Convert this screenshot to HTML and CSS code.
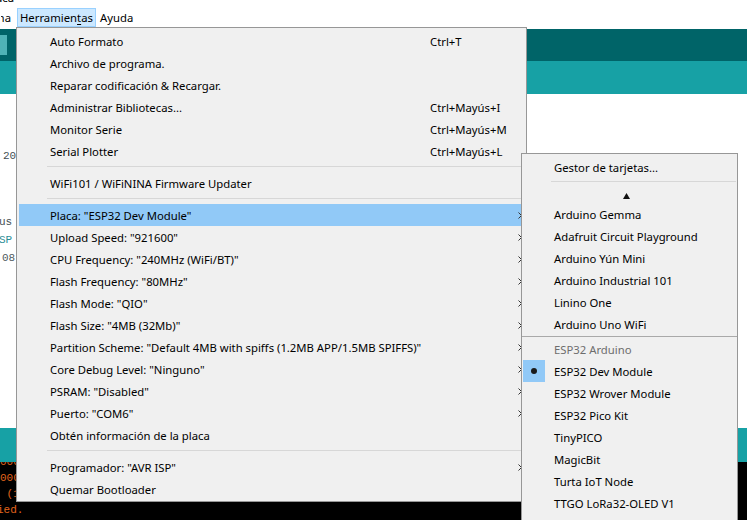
FILE: index.html
```html
<!DOCTYPE html>
<html lang="es">
<head>
<meta charset="utf-8">
<title>Herramientas</title>
<link rel="stylesheet" href="styles.css">
</head>
<body>
<div class="app">
  <div class="titlebar"><span class="clip-end">Arduino 1.8.13 - sketch_espnow_dev_placa</span></div>
  <div class="menubar">
    <span class="mb-item mb-cut"><span>Programa</span></span>
    <span class="mb-item mb-active">Herramien<u>t</u>as</span>
    <span class="mb-item mb-plain">Ayuda</span>
  </div>
  <div class="toolbar"><span class="tb-btn"></span></div>
  <div class="tabs"></div>
  <div class="editor">
    <div class="code l1"><span class="c-dark">20</span></div>
    <div class="code l2"><span class="c-dark">us</span></div>
    <div class="code l3"><span class="c-teal">SP</span></div>
    <div class="code l4"><span class="c-gray">08)</span></div>
  </div>
  <div class="status"></div>
  <div class="console">
    <div class="con-lines">
      <div class="con-line">000</div>
      <div class="con-line">000</div>
      <div class="con-line"> (1</div>
      <div class="con-line con-cut">ied.</div>
    </div>
  </div>
</div>

<div class="menu">
  <div class="item"><span class="ck"></span><span class="lbl">Auto Formato</span><span class="sc">Ctrl+T</span><span></span></div>
  <div class="item"><span class="ck"></span><span class="lbl">Archivo de programa.</span><span class="sc"></span><span></span></div>
  <div class="item"><span class="ck"></span><span class="lbl">Reparar codificación &amp; Recargar.</span><span class="sc"></span><span></span></div>
  <div class="item"><span class="ck"></span><span class="lbl">Administrar Bibliotecas...</span><span class="sc">Ctrl+Mayús+I</span><span></span></div>
  <div class="item"><span class="ck"></span><span class="lbl">Monitor Serie</span><span class="sc">Ctrl+Mayús+M</span><span></span></div>
  <div class="item"><span class="ck"></span><span class="lbl">Serial Plotter</span><span class="sc">Ctrl+Mayús+L</span><span></span></div>
  <div class="sep"></div>
  <div class="item"><span class="ck"></span><span class="lbl">WiFi101 / WiFiNINA Firmware Updater</span><span class="sc"></span><span></span></div>
  <div class="sep"></div>
  <div class="item selected"><span class="ck"></span><span class="lbl">Placa: "ESP32 Dev Module"</span><span class="sc"></span><span class="arrow"><svg width="4" height="7" viewBox="0 0 4 7"><path d="M0.5 0.5 L3.5 3.5 L0.5 6.5" fill="none" stroke="#333" stroke-width="1"/></svg></span></div>
  <div class="item"><span class="ck"></span><span class="lbl">Upload Speed: "921600"</span><span class="sc"></span><span class="arrow"><svg width="4" height="7" viewBox="0 0 4 7"><path d="M0.5 0.5 L3.5 3.5 L0.5 6.5" fill="none" stroke="#333" stroke-width="1"/></svg></span></div>
  <div class="item"><span class="ck"></span><span class="lbl">CPU Frequency: "240MHz (WiFi/BT)"</span><span class="sc"></span><span class="arrow"><svg width="4" height="7" viewBox="0 0 4 7"><path d="M0.5 0.5 L3.5 3.5 L0.5 6.5" fill="none" stroke="#333" stroke-width="1"/></svg></span></div>
  <div class="item"><span class="ck"></span><span class="lbl">Flash Frequency: "80MHz"</span><span class="sc"></span><span class="arrow"><svg width="4" height="7" viewBox="0 0 4 7"><path d="M0.5 0.5 L3.5 3.5 L0.5 6.5" fill="none" stroke="#333" stroke-width="1"/></svg></span></div>
  <div class="item"><span class="ck"></span><span class="lbl">Flash Mode: "QIO"</span><span class="sc"></span><span class="arrow"><svg width="4" height="7" viewBox="0 0 4 7"><path d="M0.5 0.5 L3.5 3.5 L0.5 6.5" fill="none" stroke="#333" stroke-width="1"/></svg></span></div>
  <div class="item"><span class="ck"></span><span class="lbl">Flash Size: "4MB (32Mb)"</span><span class="sc"></span><span class="arrow"><svg width="4" height="7" viewBox="0 0 4 7"><path d="M0.5 0.5 L3.5 3.5 L0.5 6.5" fill="none" stroke="#333" stroke-width="1"/></svg></span></div>
  <div class="item"><span class="ck"></span><span class="lbl">Partition Scheme: "Default 4MB with spiffs (1.2MB APP/1.5MB SPIFFS)"</span><span class="sc"></span><span class="arrow"><svg width="4" height="7" viewBox="0 0 4 7"><path d="M0.5 0.5 L3.5 3.5 L0.5 6.5" fill="none" stroke="#333" stroke-width="1"/></svg></span></div>
  <div class="item"><span class="ck"></span><span class="lbl">Core Debug Level: "Ninguno"</span><span class="sc"></span><span class="arrow"><svg width="4" height="7" viewBox="0 0 4 7"><path d="M0.5 0.5 L3.5 3.5 L0.5 6.5" fill="none" stroke="#333" stroke-width="1"/></svg></span></div>
  <div class="item"><span class="ck"></span><span class="lbl">PSRAM: "Disabled"</span><span class="sc"></span><span class="arrow"><svg width="4" height="7" viewBox="0 0 4 7"><path d="M0.5 0.5 L3.5 3.5 L0.5 6.5" fill="none" stroke="#333" stroke-width="1"/></svg></span></div>
  <div class="item"><span class="ck"></span><span class="lbl">Puerto: "COM6"</span><span class="sc"></span><span class="arrow"><svg width="4" height="7" viewBox="0 0 4 7"><path d="M0.5 0.5 L3.5 3.5 L0.5 6.5" fill="none" stroke="#333" stroke-width="1"/></svg></span></div>
  <div class="item"><span class="ck"></span><span class="lbl">Obtén información de la placa</span><span class="sc"></span><span></span></div>
  <div class="sep"></div>
  <div class="item"><span class="ck"></span><span class="lbl">Programador: "AVR ISP"</span><span class="sc"></span><span class="arrow"><svg width="4" height="7" viewBox="0 0 4 7"><path d="M0.5 0.5 L3.5 3.5 L0.5 6.5" fill="none" stroke="#333" stroke-width="1"/></svg></span></div>
  <div class="item"><span class="ck"></span><span class="lbl">Quemar Bootloader</span><span class="sc"></span><span></span></div>
</div>

<div class="submenu">
  <div class="sitem"><span class="ck"></span><span class="lbl">Gestor de tarjetas...</span></div>
  <div class="sep sub-sep"></div>
  <div class="scroll-up"><svg width="7" height="6" viewBox="0 0 7 6"><polygon points="3.5,0 7,6 0,6" fill="#111"/></svg></div>
  <div class="sitem"><span class="ck"></span><span class="lbl">Arduino Gemma</span></div>
  <div class="sitem"><span class="ck"></span><span class="lbl">Adafruit Circuit Playground</span></div>
  <div class="sitem"><span class="ck"></span><span class="lbl">Arduino Yún Mini</span></div>
  <div class="sitem"><span class="ck"></span><span class="lbl">Arduino Industrial 101</span></div>
  <div class="sitem"><span class="ck"></span><span class="lbl">Linino One</span></div>
  <div class="sitem"><span class="ck"></span><span class="lbl">Arduino Uno WiFi</span></div>
  <div class="full-sep"></div>
  <div class="sitem disabled"><span class="ck"></span><span class="lbl">ESP32 Arduino</span></div>
  <div class="sitem"><span class="ck checked"><span class="dot"></span></span><span class="lbl">ESP32 Dev Module</span></div>
  <div class="sitem"><span class="ck"></span><span class="lbl">ESP32 Wrover Module</span></div>
  <div class="sitem"><span class="ck"></span><span class="lbl">ESP32 Pico Kit</span></div>
  <div class="sitem"><span class="ck"></span><span class="lbl">TinyPICO</span></div>
  <div class="sitem"><span class="ck"></span><span class="lbl">MagicBit</span></div>
  <div class="sitem"><span class="ck"></span><span class="lbl">Turta IoT Node</span></div>
  <div class="sitem"><span class="ck"></span><span class="lbl">TTGO LoRa32-OLED V1</span></div>
  <div class="sitem"><span class="ck"></span><span class="lbl">TTGO T1</span></div>
</div>
</body>
</html>
```
FILE: styles.css
```css
html, body {
  margin: 0;
  padding: 0;
}
body {
  width: 747px;
  height: 520px;
  overflow: hidden;
  position: relative;
  background: #ffffff;
  font-family: "Noto Sans", "Open Sans", sans-serif;
  font-size: 11.3px;
  color: #000;
}

.app {
  display: flex;
  flex-direction: column;
  height: 520px;
}

.titlebar {
  height: 8px;
  overflow: hidden;
  display: flex;
  justify-content: flex-end;
  width: 14px;
}
.titlebar .clip-end {
  white-space: nowrap;
  line-height: 14px;
  margin-top: -9px;
  color: #000;
}

.menubar {
  height: 21px;
  display: flex;
  align-items: flex-start;
  background: #fff;
}
.mb-item {
  height: 19px;
  line-height: 17px;
  box-sizing: border-box;
  border: 1px solid transparent;
  white-space: nowrap;
}
.mb-cut {
  width: 17px;
  display: flex;
  justify-content: flex-end;
  overflow: hidden;
  padding-right: 5px;
}
.mb-active {
  width: 79px;
  padding-left: 2px;
  background: #cce8ff;
  border-color: #99d1ff;
}
.mb-active u {
  text-decoration-thickness: 1px;
  text-underline-offset: 2px;
}
.mb-plain {
  padding-left: 3px;
}

.toolbar {
  height: 32px;
  background: #006468;
  display: flex;
  align-items: flex-start;
}
.tb-btn {
  width: 7px;
  height: 20px;
  margin-top: 6px;
  background: #4fb3b6;
}

.tabs {
  height: 33px;
  background: #17a1a5;
}

.editor {
  height: 334px;
  background: #fff;
  font-family: "Liberation Mono", "DejaVu Sans Mono", monospace;
  font-size: 11px;
  padding-top: 53px;
  box-sizing: border-box;
}
.code {
  height: 18px;
  line-height: 18px;
  white-space: pre;
}
.l1 { padding-left: 3px; }
.l2 { margin-top: 48px; margin-left: -1px; }
.l3 { margin-left: -1px; }
.l4 { margin-left: 2px; }
.c-dark { color: #434f54; }
.c-teal { color: #2b8e96; }
.c-gray { color: #4f5b60; }

.status {
  height: 34px;
  background: #17a1a5;
}

.console {
  flex: 1;
  background: #000;
  overflow: hidden;
  font-family: "Liberation Mono", "DejaVu Sans Mono", monospace;
  font-size: 11px;
  color: #e0641c;
}
.con-lines {
  margin-top: -8px;
}
.con-line {
  height: 16px;
  line-height: 16px;
  white-space: pre;
}
.con-cut {
  margin-left: -3px;
}

/* Dropdown menu */
.menu {
  position: absolute;
  left: 16px;
  top: 27px;
  width: 511px;
  box-sizing: border-box;
  border: 1px solid #979797;
  background: #f0f0f0;
  padding: 2px 2px 1px 2px;
}
.item, .sitem {
  height: 22px;
  display: grid;
  align-items: center;
  padding-top: 1px;
  box-sizing: border-box;
  white-space: nowrap;
}
.item {
  grid-template-columns: 31px 380px 1fr 12px;
}
.item.selected {
  background: #91c9f7;
}
.sc {
  color: #000;
}
.arrow {
  display: flex;
  align-items: center;
  padding-left: 6px;
  padding-bottom: 1px;
}
.arrow svg {
  display: block;
}
.ck {
  width: 22px;
  height: 22px;
  align-self: start;
  margin-top: -1px;
  display: flex;
  align-items: center;
  justify-content: center;
}
.ck.checked {
  background: #91c9f7;
}
.dot {
  width: 6px;
  height: 6px;
  border-radius: 50%;
  background: #1a1a1a;
}

.sep {
  height: 10px;
  box-sizing: border-box;
  padding-top: 4px;
  padding-left: 28px;
}
.sep::after {
  content: "";
  display: block;
  height: 1px;
  background: #d7d7d7;
}

/* Sub menu */
.submenu {
  position: absolute;
  left: 521px;
  top: 153px;
  width: 217px;
  box-sizing: border-box;
  border: 1px solid #979797;
  background: #f0f0f0;
  padding: 2px 1px 6px 1px;
}
.sitem {
  grid-template-columns: 31px 1fr;
}
.sitem.disabled .lbl {
  color: #6d6d6d;
}
.sub-sep {
  height: 7px;
  padding-top: 3px;
}
.scroll-up {
  height: 18px;
  box-sizing: border-box;
  padding-top: 8px;
  padding-left: 100px;
}
.scroll-up svg {
  display: block;
}
.full-sep {
  height: 3px;
  margin: 0 -1px;
  box-sizing: border-box;
  padding-top: 1px;
}
.full-sep::after {
  content: "";
  display: block;
  height: 1px;
  background: #a9a9a9;
}
```
